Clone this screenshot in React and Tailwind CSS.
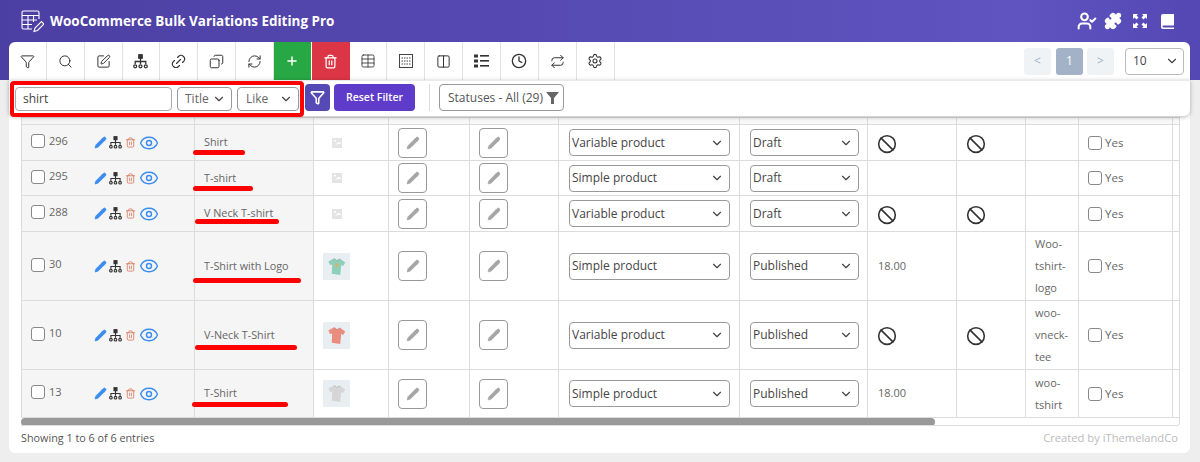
import { Filter, Search, SquarePen, Link2, Copy, RefreshCw, Plus, Trash2, Table, Columns2, Clock, Repeat, Settings, ChevronDown, UserCheck, Puzzle, Pencil, Eye, Ban } from 'lucide-react';

function Logo() {
  return (
    <svg width="24" height="24" viewBox="0 0 24 24" fill="none" stroke="white" strokeWidth="1.1">
      <path d="M12 20H3.5a1.5 1.5 0 0 1-1.500-1.500V3.500A1.500 1.500 0 0 1 3.500 2h14A1.500 1.500 0 0 1 19 3.500V10" />
      <path d="M2 6.500h17M2 11h15M2 15.500h10M8 6.500V20M13.500 6.500V13" />
      <path d="M14 22.500l1-3.500 6.500-6.500 2.500 2.500-6.500 6.500z" />
    </svg>
  );
}

function SiteMap({ size = 15, color = '#333' }) {
  return (
    <svg width={size} height={size} viewBox="0 0 15 15" fill="none" stroke={color} strokeWidth="1.300">
      <rect x="5.800" y="0.800" width="3.400" height="3.400" fill={color} />
      <path d="M7.500 4v6M2.200 10V7.500h10.600V10" />
      <circle cx="2.200" cy="12.300" r="1.500" />
      <circle cx="7.500" cy="12.300" r="1.500" />
      <circle cx="12.800" cy="12.300" r="1.500" />
    </svg>
  );
}

function Expand() {
  return (
    <svg width="14" height="14" viewBox="0 0 14 14" fill="white">
      <path d="M0 0h5L3.500 1.500 5.500 3.500 3.500 5.500 1.500 3.500 0 5z" />
      <path d="M14 0v5l-1.500-1.500-2 2-2-2 2-2L9 0z" />
      <path d="M0 14V9l1.500 1.500 2-2 2 2-2 2L5 14z" />
      <path d="M14 14H9l1.500-1.500-2-2 2-2 2 2L14 9z" />
    </svg>
  );
}

function BookIcon() {
  return (
    <svg width="13" height="15" viewBox="0 0 13 15">
      <path d="M2 0h11v11.500H2.500a1 1 0 0 0 0 2H13V15H2a2 2 0 0 1-2-2V2a2 2 0 0 1 2-2z" fill="white" />
    </svg>
  );
}

function KeyGrid() {
  return (
    <svg width="14" height="14" viewBox="0 0 14 14" fill="none" stroke="#444" strokeWidth="1">
      <rect x="0.500" y="0.500" width="13" height="13" />
      <path d="M2.500 4h9M2.500 7h9M2.500 10h9" strokeDasharray="1.500 1" />
    </svg>
  );
}

function Bullets() {
  return (
    <svg width="15" height="14" viewBox="0 0 15 14" fill="#333">
      <rect x="0" y="0.500" width="4" height="3" />
      <rect x="0" y="5.500" width="4" height="3" />
      <rect x="0" y="10.500" width="4" height="3" />
      <rect x="6" y="1" width="9" height="1.600" />
      <rect x="6" y="6" width="9" height="1.600" />
      <rect x="6" y="11" width="9" height="1.600" />
    </svg>
  );
}

function Tool({ children, className = 'border-r border-[#e2e2e2]' }) {
  return <div className={`w-[37.850px] h-full flex items-center justify-center shrink-0 ${className}`}>{children}</div>;
}

function Box({ children, className = '' }) {
  return (
    <div className={`h-[27px] px-[2px] flex items-center justify-between bg-white border border-[#999] rounded-[4px] text-[12px] text-[#444] shrink-0 ${className}`}>
      <span>{children}</span>
      <ChevronDown size={14} strokeWidth={2} className="text-[#444] mr-[3px]" />
    </div>
  );
}

function Placeholder() {
  return (
    <svg width="10" height="10" viewBox="0 0 10 10" className="ml-[9px]">
      <rect width="10" height="10" fill="#e4e4e4" />
      <path d="M3 7l3-3 3 1v1H6z" fill="#fff" />
      <rect x="2" y="2" width="2" height="1.500" fill="#fff" />
    </svg>
  );
}

function Shirt({ color, logo }) {
  return (
    <div className="w-[27px] h-[27px] bg-[#e9eef2] flex items-center justify-center">
      <svg width="19" height="19" viewBox="0 0 19 19" className="rotate-[4deg]">
        <path d="M6.500 1.500L1 5l2 3.500 2-.8.300 9.300 8.500.7.300-10 2 .8L18 5l-5.500-3.500-3 2z" fill={color} />
        <path d="M6.500 1.500l3 2 3-2" fill="none" stroke="#00000022" />
        {logo && <circle cx="9.500" cy="8" r="1.800" fill="#d9b36a" />}
      </svg>
    </div>
  );
}

function EditBtn() {
  return (
    <div className="w-[29px] h-[30px] border border-[#999] rounded-[4px] flex items-center justify-center bg-white">
      <Pencil size={14} fill="#a6a6a6" stroke="#a0a0a0" strokeWidth={1.200} />
    </div>
  );
}

function CheckBox({ className = '' }) {
  return <div className={`w-[14px] h-[14px] border border-[#888] rounded-[3px] bg-white shrink-0 ${className}`} />;
}

// line = the red hand-drawn underline sitting over the name cell
const rows = [
  { id: 296, name: 'Shirt', type: 'Variable product', status: 'Draft', ban: true, h: 'h-[36px]', line: 'top-[16px] left-[-2px] w-[52px]' },
  { id: 295, name: 'T-shirt', type: 'Simple product', status: 'Draft', h: 'h-[35px]', line: 'top-[16px] left-[-2px] w-[60px]' },
  { id: 288, name: 'V Neck T-shirt', type: 'Variable product', status: 'Draft', ban: true, h: 'h-[36px]', line: 'top-[14px] left-0 w-[84px]' },
  { id: 30, name: 'T-Shirt with Logo', type: 'Simple product', status: 'Published', price: '18.00', slug: 'Woo-tshirt-logo', shirt: '#8fcfba', logo: true, h: 'h-[69px]', line: 'top-[20px] left-[-2px] w-[108px]' },
  { id: 10, name: 'V-Neck T-Shirt', type: 'Variable product', status: 'Published', ban: true, slug: 'woo-vneck-tee', shirt: '#ea8d7e', h: 'h-[69px]', line: 'top-[18px] left-0 w-[102px]' },
  { id: 13, name: 'T-Shirt', type: 'Simple product', status: 'Published', price: '18.00', slug: 'woo-tshirt', shirt: '#d6d6d6', h: 'h-[48px]', line: 'top-[17px] left-[-3px] w-[96px]' },
];

const td = 'border border-[#dcdcdc] p-0 align-middle';

export default function App() {
  return (
    <div className="w-[1200px] h-[462px] overflow-hidden bg-[#eeeeee] font-['Open_Sans',sans-serif]">
      {/* Header */}
      <div className="h-[80px] pl-[20px] pr-[26px] pt-[9px] flex items-start justify-between bg-linear-to-r from-[#4c3fa3] via-[#5f54c0] via-85% to-[#5447b3]">
        <div className="flex items-center gap-[6px] h-[24px]">
          <Logo />
          <span className="text-white font-bold text-[13.450px]">WooCommerce Bulk Variations Editing Pro</span>
        </div>
        <div className="flex items-center h-[24px] text-white">
          <UserCheck size={20} strokeWidth={2.500} />
          <Puzzle size={18} fill="white" className="ml-[7px]" />
          <div className="ml-[11px]"><Expand /></div>
          <div className="ml-[14px]"><BookIcon /></div>
        </div>
      </div>

      {/* Card */}
      <div className="relative mx-[9px] mt-[-38px] w-[1181px] h-[411px] bg-white rounded-[6px]">
        {/* Toolbar */}
        <div className="h-[38px] flex items-center pr-[6px] text-[#333]">
          <Tool><Filter size={15} strokeWidth={1.600} /></Tool>
          <Tool><Search size={15} strokeWidth={1.600} /></Tool>
          <Tool><SquarePen size={15} strokeWidth={1.600} /></Tool>
          <Tool><SiteMap /></Tool>
          <Tool><Link2 size={17} strokeWidth={1.600} className="-rotate-45" /></Tool>
          <Tool><Copy size={15} strokeWidth={1.600} className="rotate-90" /></Tool>
          <Tool><RefreshCw size={15} strokeWidth={1.600} /></Tool>
          <Tool className="bg-[#28a745] border-r border-white text-white"><Plus size={14} strokeWidth={2.500} /></Tool>
          <Tool className="bg-[#dc3545] text-white"><Trash2 size={15} strokeWidth={2} /></Tool>
          <Tool><Table size={16} strokeWidth={1.300} /></Tool>
          <Tool><KeyGrid /></Tool>
          <Tool><Columns2 size={15} strokeWidth={1.600} /></Tool>
          <Tool><Bullets /></Tool>
          <Tool><Clock size={16} strokeWidth={2} /></Tool>
          <Tool><Repeat size={15} strokeWidth={1.600} /></Tool>
          <Tool><Settings size={16} strokeWidth={1.600} /></Tool>
          <div className="ml-auto flex items-center text-[12px]">
            <div className="w-[27px] h-[27px] bg-[#eff3f6] text-[#a3b2c7] rounded-[3px] flex items-center justify-center">&lt;</div>
            <div className="ml-[5px] w-[27px] h-[27px] bg-[#a3b2c7] text-white rounded-[3px] flex items-center justify-center">1</div>
            <div className="ml-[4px] w-[27px] h-[27px] bg-[#eff3f6] text-[#a3b2c7] rounded-[3px] flex items-center justify-center">&gt;</div>
            <Box className="w-[59px] ml-[11px] !pl-[7px] !pr-[1px] !border-[#bbb]">10</Box>
          </div>
        </div>

        {/* Filter row */}
        <div className="relative z-10 h-[36px] flex items-start bg-white rounded-b-[6px] border-t border-[#eaeaea] shadow-[0_1px_4px_rgba(0,0,0,0.3)]">
          <div className="ml-[1px] h-[36px] w-[294px] flex items-center gap-[5px] pl-[1px] border-4 border-[#f00] rounded-[4px] bg-white">
            <div className="w-[157px] h-[24px] shrink-0 bg-white border border-[#aaa] rounded-[4px] pl-[7px] flex items-center text-[12px] text-[#444]">shirt</div>
            <Box className="w-[55px] !h-[24px] !pl-[7px] !text-[#666]">Title</Box>
            <Box className="w-[62px] !h-[24px] !pl-[8px] !text-[#666]">Like</Box>
          </div>
          <div className="ml-[1px] mt-[3px] w-[25px] h-[27px] bg-[#5549b5] rounded-[4px] flex items-center justify-center">
            <Filter size={15} stroke="white" strokeWidth={2.500} />
          </div>
          <div className="ml-[4px] mt-[3px] w-[81px] h-[27px] bg-[#5f3bc9] rounded-[4px] flex items-center justify-center text-white text-[10.500px] font-semibold">Reset Filter</div>
          <div className="ml-[14px] mt-[3px] w-px h-[27px] bg-[#dddddd]" />
          <div className="ml-[9px] mt-[3px] w-[125px] h-[27px] border border-[#999] rounded-[4px] pl-[8px] flex items-center gap-[3px] text-[12px] text-[#555] whitespace-nowrap">
            Statuses - All (29)
            <svg width="13" height="12" viewBox="0 0 13 12" fill="#666"><path d="M0 0h13L8 6v6H5V6z" /></svg>
          </div>
        </div>

        {/* Table */}
        <div className="mx-[12px] w-[1159px] h-[309px] mt-px border-b border-r border-[#dcdcdc] rounded-br-[4px] overflow-hidden">
          <table className="table-fixed border-collapse w-[1159px] text-[11px] text-[#666]">
            <colgroup>
              <col className="w-[173px]" /><col className="w-[119px]" /><col className="w-[75px]" /><col className="w-[81px]" />
              <col className="w-[89px]" /><col className="w-[181px]" /><col className="w-[128px]" /><col className="w-[89px]" />
              <col className="w-[69px]" /><col className="w-[53px]" /><col className="w-[94px]" /><col className="w-[8px]" />
            </colgroup>
            <tbody>
              <tr className="h-[7px]">
                <td className={`${td} bg-[#f5f5f5]`} /><td className={`${td} bg-[#f5f5f5]`} />
                {Array.from({ length: 10 }, (_, i) => <td key={i} className={`${td} bg-[#f8f8f8]`} />)}
              </tr>
              {rows.map(r => (
                <tr key={r.id} className={r.h}>
                  <td className={`${td} bg-[#f5f5f5]`}>
                    <div className="flex items-center pl-[9px]">
                      <div className="w-[38px] flex items-center gap-[4px] mb-[3px]">
                        <CheckBox />
                        <span>{r.id}</span>
                      </div>
                      <div className="ml-[25px] flex items-center">
                        <Pencil size={13} fill="#3b8df0" stroke="#3b8df0" strokeWidth={1.500} />
                        <div className="ml-[2px]"><SiteMap size={13} /></div>
                        <Trash2 size={11} stroke="#d9785f" strokeWidth={1.800} className="ml-[3px]" />
                        <Eye size={20} stroke="#3b8df0" strokeWidth={1.700} className="ml-[2.500px]" />
                      </div>
                    </div>
                  </td>
                  <td className={`${td} bg-[#f5f5f5]`}>
                    <div className="relative pl-[9px] whitespace-nowrap text-[10.800px]">
                      {r.name}
                      <div className={`absolute h-[5px] bg-[#f00] rounded-full ${r.line}`} />
                    </div>
                  </td>
                  <td className={td}>
                    {r.shirt ? <div className="pl-[9px]"><Shirt color={r.shirt} logo={r.logo} /></div> : <div className="pl-[9px]"><Placeholder /></div>}
                  </td>
                  <td className={td}><div className="pl-[9px]"><EditBtn /></div></td>
                  <td className={td}><div className="pl-[9px]"><EditBtn /></div></td>
                  <td className={td}><div className="pl-[10px]"><Box className="w-[161px]">{r.type}</Box></div></td>
                  <td className={td}><div className="pl-[10px]"><Box className="w-[109px]">{r.status}</Box></div></td>
                  <td className={td}><div className="pl-[9px] flex items-center h-[22px]">{r.ban ? <Ban size={20} stroke="#333" strokeWidth={1.900} className="mt-[2px]" /> : <span className="pl-px">{r.price}</span>}</div></td>
                  <td className={td}><div className="pl-[9px]">{r.ban && <Ban size={20} stroke="#333" strokeWidth={1.900} className="mt-[2px]" />}</div></td>
                  <td className={td}><div className="pl-[9px] pr-[8px] leading-[22px]">{r.slug}</div></td>
                  <td className={td}>
                    <div className="pl-[9px] flex items-center gap-[3px]"><CheckBox /><span className="text-[11.500px]">Yes</span></div>
                  </td>
                  <td className={td} />
                </tr>
              ))}
            </tbody>
          </table>
          {/* Scrollbar */}
          <div className="h-[8px] bg-white"><div className="w-[914px] h-[8px] bg-[#999999] rounded-[4px]" /></div>
        </div>

        {/* Footer */}
        <div className="mx-[12px] mt-[4px] flex justify-between">
          <span className="text-[#555] text-[10.800px]">Showing 1 to 6 of 6 entries</span>
          <span className="text-[#bbbbbb] text-[11.200px]">Created by iThemelandCo</span>
        </div>
      </div>
    </div>
  );
}
